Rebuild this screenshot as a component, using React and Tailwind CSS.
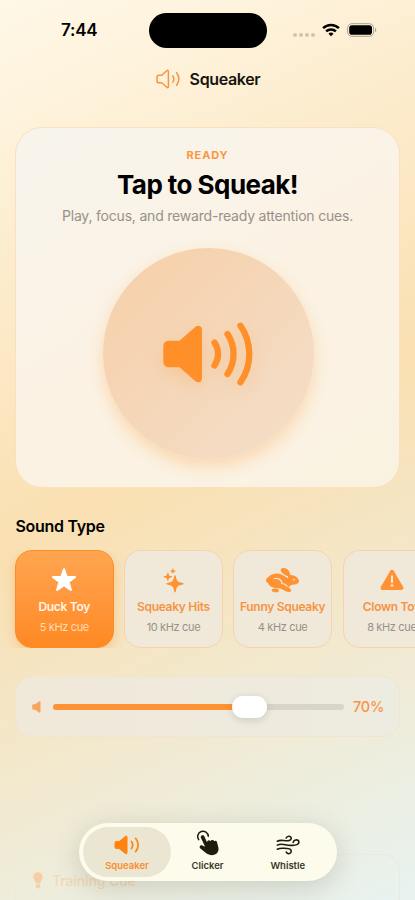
const cards = [
  { name: "Duck Toy", cue: "5 kHz cue", Icon: StarIcon, active: true },
  { name: "Squeaky Hits", cue: "10 kHz cue", Icon: SparklesIcon },
  { name: "Funny Squeaky", cue: "4 kHz cue", Icon: HareIcon },
  { name: "Clown Toy", cue: "8 kHz cue", Icon: WarningIcon },
];

function StatusBar() {
  return (
    <div className="flex h-[60px] shrink-0 items-center justify-between pr-[38px] pl-[61px]">
      <span className="w-[62px] text-[17px] leading-5 font-semibold tracking-[-0.2px]">7:44</span>
      <div className="ml-[25.5px] h-[35px] w-[118px] rounded-full bg-black" />
      <div className="ml-auto flex items-center">
        <div className="mt-[9px] mr-[7px] flex gap-[2px]">
          <i className="size-[4px] rounded-full bg-[#cfc4b1]" />
          <i className="size-[4px] rounded-full bg-[#cfc4b1]" />
          <i className="size-[4px] rounded-full bg-[#cfc4b1]" />
          <i className="size-[4px] rounded-full bg-[#cfc4b1]" />
        </div>
        <svg width="18" height="14" viewBox="0 0 18 14" fill="none" stroke="#000" strokeWidth="2.5">
          <path d="M1.1 5.2a11.3 11.3 0 0 1 15.8 0" />
          <path d="M4.1 8.4a7 7 0 0 1 9.8 0" />
          <path d="M9 13.3 6.5 10.7a3.6 3.6 0 0 1 5 0z" fill="#000" stroke="none" />
        </svg>
        <svg className="ml-[7px]" width="30" height="14" viewBox="0 0 30 14">
          <rect x=".6" y=".7" width="26" height="12.6" rx="4.2" fill="none" stroke="#a9a091" />
          <rect x="2.2" y="2.3" width="22.8" height="9.4" rx="2.8" />
          <path d="M28 4.8c1.8.7 1.8 3.7 0 4.4z" fill="#a9a091" />
        </svg>
      </div>
    </div>
  );
}

function NavSpeaker() {
  return (
    <svg width="25" height="20" viewBox="0 0 25 20" fill="none" stroke="#f79443" strokeWidth="1.5" strokeLinecap="round" strokeLinejoin="round">
      <path d="M2.8 6.2h2.400q.6 0 1.100-.4l4.500-4.100c.8-.7 1.600-.3 1.600.7v15.200c0 1-.8 1.400-1.600.7L6.300 14.200q-.5-.4-1.100-.4H2.800Q1 13.800 1 12V8q0-1.800 1.800-1.800z" />
      <path d="M16.800 6.800q2.200 3.200 0 6.400" />
      <path d="M20.600 3.700q4.600 6.300 0 12.600" />
    </svg>
  );
}

function BigSpeaker() {
  return (
    <svg className="drop-shadow-[0_6px_8px_rgba(255,140,40,0.2)]" width="90" height="64" viewBox="0 0 90 64">
      <path
        d="M6 18.7H16.5L32.5 4.8C35.3 2.500 39 4 39 7.500V56.500C39 60 35.300 61.500 32.500 59.200L16.500 45.300H6Q.3 45.300.3 39.500V24.500Q.3 18.700 6 18.700z"
        fill="#ff8f28"
      />
      <g fill="none" stroke="#ff8f28" strokeWidth="6.3" strokeLinecap="round">
        <path d="M51.5 20.500a20.300 20.300 0 0 1 0 23" />
        <path d="M64.500 12a36 36 0 0 1 0 40" />
        <path d="M77.500 3.700a50 50 0 0 1 0 56.600" />
      </g>
    </svg>
  );
}

function StarIcon() {
  return (
    <svg width="26" height="24" viewBox="0 0 26 24" fill="#fff" stroke="#fff" strokeWidth="2.2" strokeLinejoin="round">
      <path d="M13 1.400 15.700 9H23.900L17.400 13.900 19.800 21.900 13 17.200 6.200 21.900 8.600 13.900 2.100 9H10.300z" />
    </svg>
  );
}

function SparklesIcon() {
  return (
    <svg width="21" height="25" viewBox="0 0 21 25" fill="#ff9233">
      <path d="M12 7.200c.5 0 .7.300.8.800.9 5 1.700 6 7 7 .5.100.8.300.8.800s-.3.700-.8.800c-5.300 1-6.100 2-7 7-.1.500-.3.800-.8.800s-.7-.3-.8-.8c-.9-5-1.700-6-7-7-.5-.1-.8-.3-.8-.8s.3-.7.8-.8c5.300-1 6.100-2 7-7 .1-.5.300-.8.800-.8z" />
      <path d="M4.900 4.400c.3 0 .5.200.5.500.4 2.400.8 2.800 3.400 3.300.6.100.6.900 0 1-2.600.5-3 .9-3.400 3.300-.1.600-.9.600-1 0-.4-2.400-.8-2.800-3.400-3.300-.6-.1-.6-.9 0-1 2.600-.5 3-.9 3.400-3.300 0-.3.2-.5.5-.5z" />
      <path d="M9.900.4c.2 0 .4.200.4.400.3 1.500.6 1.700 2 2 .5.100.5.700 0 .8-1.400.3-1.700.5-2 2-.1.500-.7.500-.8 0-.3-1.500-.6-1.700-2-2-.5-.1-.5-.7 0-.8 1.400-.3 1.700-.5 2-2 0-.2.2-.4.4-.4z" />
    </svg>
  );
}

function HareIcon() {
  return (
    <svg width="33" height="25" viewBox="0 0 99 75">
      <path
        d="M0 38C0 31 5 29 10 25C17 17 29 15 39 17C50 19 58 26 66 31L66 25C56 21 43 13 44 5C47-2 60-1 67 7C71 12 72 17 73 21C84 20 98 29 99 39C99 46 91 50 80 50C75 51 70 54 67 58L72 62C78 66 76 72 69 72C61 72 53 65 44 62C36 60 23 60 16 56C10 53 7 49 6 44C2 43 0 41 0 38z"
        fill="#ff9233"
      />
      <path d="M17 66C20 61 33 60 38 65C41 70 36 74 30 73C24 72 16 71 17 66z" fill="#ff9233" />
      <path d="M25 32C38 29 47 36 48 46C54 47 59 50 63 54" fill="none" stroke="#f0e7d5" strokeWidth="4" strokeLinecap="round" strokeLinejoin="round" />
      <circle cx="84" cy="35" r="2.800" fill="#f0e7d5" />
    </svg>
  );
}

function WarningIcon() {
  return (
    <svg width="24" height="22" viewBox="0 0 24 22">
      <path d="M12 2.800 21.500 18.900H2.500z" fill="#ff9233" stroke="#ff9233" strokeWidth="4" strokeLinejoin="round" />
      <path d="M12 7.300v6" stroke="#f3ead8" strokeWidth="2" strokeLinecap="round" />
      <circle cx="12" cy="16.500" r="1.300" fill="#f3ead8" />
    </svg>
  );
}

function TabSpeaker() {
  return (
    <svg width="26" height="20" viewBox="0 0 26 20">
      <path d="M2.500 5.900H5.300L11 1.200c1.100-.9 2.500-.4 2.500 1v15.600c0 1.400-1.400 1.900-2.500 1L5.300 14.100H2.500Q.5 14.100.5 12.100V7.900Q.5 5.900 2.500 5.900z" fill="#ff840f" />
      <g fill="none" stroke="#ff840f" strokeWidth="1.7" strokeLinecap="round">
        <path d="M17.400 6.500q2.700 3.500 0 7" />
        <path d="M21.600 3.300q5.200 6.700 0 13.400" />
      </g>
    </svg>
  );
}

function TapIcon() {
  return (
    <svg width="24" height="26" viewBox="0 0 24 26">
      <path d="M2.700 9.600a5.300 5.300 0 1 1 9.600-3.400" fill="none" stroke="#1f1b0d" strokeWidth="1.500" strokeLinecap="round" />
      <path
        d="M5.600 5.600C6.700 4.900 7.900 5.400 8.400 6.500L11 12.300C11.200 10.200 13.500 9.600 14.500 11.300 15.200 9.600 17.500 9.500 18.200 11.300 19.300 10.200 20.900 10.800 21.100 12.400L22.300 17.200C23.200 21.100 21.300 23.700 18.300 24.700 14.500 25.900 11.600 24.500 8.700 22.100L4.400 18.500C2.700 17.100 4.200 14.700 6.400 15.500L9.100 16.700 5 7.900C4.500 7 4.800 6.100 5.600 5.600z"
        fill="#1f1b0d"
      />
    </svg>
  );
}

function WindIcon() {
  return (
    <svg width="24" height="20" viewBox="0 0 24 20" fill="none" stroke="#1f1b0d" strokeWidth="1.600" strokeLinecap="round">
      <path d="M1.300 6.200C5 4.200 8 6.100 11.500 5.800 14.500 5.500 15.700 4 15.100 2.500 14.400.7 11.200.8 10.200 3" />
      <path d="M1.300 10.100C6 7.600 10 10.800 15.500 10.300 20 10.600 23.100 9.300 22.900 7 22.500 4 17.500 4.300 17.200 7.500" />
      <path d="M1.300 14.200C5 12.300 8 13.500 11.500 13.500 14.700 13.500 15.900 15.500 14.900 17.400 13.700 19.400 10.800 18.900 10.300 17" />
    </svg>
  );
}

function BulbIcon() {
  return (
    <svg width="10" height="17" viewBox="0 0 10 17" fill="#f5cfa4">
      <path d="M5 .3C7.800.3 9.700 2.300 9.700 4.900 9.700 7.700 7.400 8.700 7.200 11.600H2.800C2.600 8.700.3 7.700.3 4.900.3 2.300 2.200.3 5 .3z" />
      <path d="M2.800 12.600h4.400v2Q7.200 16.500 5 16.500T2.800 14.600z" />
    </svg>
  );
}

function SoundCard({ name, cue, Icon, active }) {
  return (
    <div
      className={`flex h-[98px] w-[98.5px] shrink-0 flex-col items-center rounded-[17px] border ${
        active
          ? "border-[#fb8c2c] bg-linear-to-b from-[#ffa550] to-[#ff8922] shadow-[0_4px_12px_rgba(255,140,40,0.35)]"
          : "border-[#f6d3ac] bg-[#f0e8d8]"
      }`}
    >
      <div className="mt-[16px] flex h-[26px] items-center justify-center">
        <Icon />
      </div>
      <span
        className={`mt-[6px] text-[12px] leading-4 font-semibold tracking-[-0.3px] whitespace-nowrap ${
          active ? "text-[#fff6e8]" : "text-[#f79443]"
        }`}
      >
        {name}
      </span>
      <span
        className={`mt-[4px] text-[11px] leading-4 tracking-[-0.35px] whitespace-nowrap ${
          active ? "text-[#ffdcb5]" : "text-[#96918a]"
        }`}
      >
        {cue}
      </span>
    </div>
  );
}

function TabBar() {
  return (
    <div className="absolute top-[823px] left-[79px] flex h-[58px] w-[257.5px] rounded-full bg-[#fdfcec] p-1 shadow-[0_6px_28px_rgba(70,70,50,0.2)]">
      <div className="flex w-[88px] flex-col items-center rounded-full bg-[#ebe6d2] pt-[8px]">
        <TabSpeaker />
        <span className="mt-[5px] text-[9.5px] leading-3 font-semibold text-[#f98d2b]">Squeaker</span>
      </div>
      <div className="flex w-[73px] flex-col items-center pt-[3px]">
        <TapIcon />
        <span className="mt-[4px] text-[9.5px] leading-3 font-semibold text-[#3a372b]">Clicker</span>
      </div>
      <div className="flex flex-1 flex-col items-center pt-[8px] pr-px">
        <WindIcon />
        <span className="mt-[5px] text-[9.5px] leading-3 font-semibold text-[#3a372b]">Whistle</span>
      </div>
    </div>
  );
}

export default function App() {
  return (
    <div className="relative flex h-[900px] w-[415px] flex-col overflow-hidden bg-[linear-gradient(155deg,#fff8e8_0%,#fae0b2_50%,#e8f3f0_100%)] font-['Inter',sans-serif] text-black">
      <StatusBar />

      <div className="flex h-[38px] shrink-0 items-center justify-center gap-[9px] pl-px">
        <NavSpeaker />
        <span className="text-[16px] font-semibold tracking-[-0.35px] text-[#17140e]">Squeaker</span>
      </div>

      <div className="mx-[15px] mt-[29px] flex h-[361px] shrink-0 flex-col items-center rounded-[27px] border border-[#fbdfbe] bg-[linear-gradient(150deg,#f7f4ec,#fbf2e4_50%,#faf2e1)]">
        <span className="mt-[19px] text-[11px] leading-4 font-bold tracking-[0.9px] text-[#fb973f]">READY</span>
        <h1 className="mt-[6px] text-[26px] leading-8 font-bold tracking-[-0.55px]">Tap to Squeak!</h1>
        <p className="mt-[5px] text-[14px] leading-5 tracking-[-0.2px] whitespace-nowrap text-[#979189]">
          Play, focus, and reward-ready attention cues.
        </p>
        <button className="mt-[22px] ml-px flex size-[211px] items-center justify-center rounded-full bg-[linear-gradient(135deg,#f7cfa8,#f3dfca)] shadow-[0_7px_15px_rgba(255,155,60,0.3)]">
          <BigSpeaker />
        </button>
      </div>

      <h2 className="mt-[26px] ml-[15.5px] text-[16px] leading-6 font-semibold tracking-[-0.3px]">Sound Type</h2>

      <div className="mt-[12px] flex shrink-0 gap-[10.7px] overflow-hidden pl-[15px]">
        {cards.map((card) => (
          <SoundCard key={card.name} {...card} />
        ))}
      </div>

      <div className="mx-[15px] mt-[28px] flex h-[61px] shrink-0 items-center rounded-[17px] border border-[#f3e4cc] bg-linear-to-r from-[#f0e8d9] to-[#edece0] pr-[15px] pl-[16px]">
        <svg width="9" height="12" viewBox="0 0 9 12" fill="#f9a45c">
          <path d="M1.500 3.300H3.200L7 .5Q8.500-.3 8.500 1V11Q8.500 12.300 7 11.500L3.200 8.700H1.500Q.2 8.700.2 7.300V4.700Q.2 3.300 1.500 3.300z" />
        </svg>
        <div className="relative ml-[12px] h-[6px] w-[291px] rounded-full bg-[#d8d5c8]">
          <div className="h-full w-[200px] rounded-full bg-[#ff9233]" />
          <div className="absolute top-[-8px] left-[179px] h-[22.5px] w-[35px] rounded-full bg-white shadow-[0_2px_8px_rgba(0,0,0,0.14)]" />
        </div>
        <span className="ml-auto text-[14.5px] font-medium tracking-[-0.3px] text-[#f79443]">70%</span>
      </div>

      <div className="mx-[15px] mt-[117px] flex h-[90px] shrink-0 items-start rounded-[17px] border border-[#ecead9] pt-[17px] pl-[17px]">
        <BulbIcon />
        <span className="ml-[9px] text-[14px] leading-[18px] font-medium tracking-[-0.1px] text-[#f2d9ba]">Training Cue</span>
      </div>

      <TabBar />
    </div>
  );
}
